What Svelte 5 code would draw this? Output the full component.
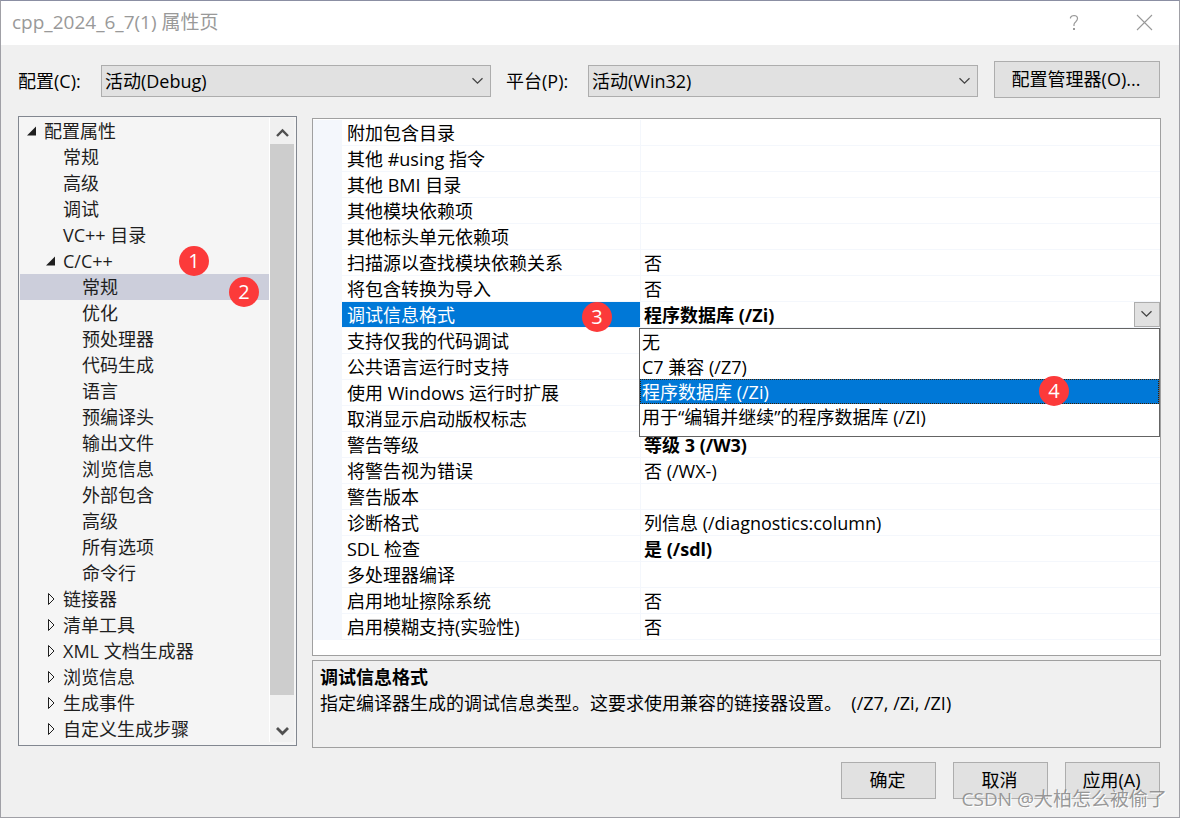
<script>
  const tree = [
    { text: '配置属性', level: 0, open: true },
    { text: '常规', level: 1 },
    { text: '高级', level: 1 },
    { text: '调试', level: 1 },
    { text: 'VC++ 目录', level: 1 },
    { text: 'C/C++', level: 1, open: true, badge: 1 },
    { text: '常规', level: 2, badge: 2 },
    { text: '优化', level: 2 },
    { text: '预处理器', level: 2 },
    { text: '代码生成', level: 2 },
    { text: '语言', level: 2 },
    { text: '预编译头', level: 2 },
    { text: '输出文件', level: 2 },
    { text: '浏览信息', level: 2 },
    { text: '外部包含', level: 2 },
    { text: '高级', level: 2 },
    { text: '所有选项', level: 2 },
    { text: '命令行', level: 2 },
    { text: '链接器', level: 1, open: false },
    { text: '清单工具', level: 1, open: false },
    { text: 'XML 文档生成器', level: 1, open: false },
    { text: '浏览信息', level: 1, open: false },
    { text: '生成事件', level: 1, open: false },
    { text: '自定义生成步骤', level: 1, open: false }
  ];
  let current = $state(6);

  const options = ['无', 'C7 兼容 (/Z7)', '程序数据库 (/Zi)', '用于“编辑并继续”的程序数据库 (/ZI)'];
  let chosen = $state(2);
  let listOpen = $state(true);

  const properties = [
    { name: '附加包含目录', value: '' },
    { name: '其他 #using 指令', value: '' },
    { name: '其他 BMI 目录', value: '' },
    { name: '其他模块依赖项', value: '' },
    { name: '其他标头单元依赖项', value: '' },
    { name: '扫描源以查找模块依赖关系', value: '否' },
    { name: '将包含转换为导入', value: '否' },
    { name: '调试信息格式', editing: true },
    { name: '支持仅我的代码调试', value: '' },
    { name: '公共语言运行时支持', value: '' },
    { name: '使用 Windows 运行时扩展', value: '' },
    { name: '取消显示启动版权标志', value: '' },
    { name: '警告等级', value: '等级 3 (/W3)', bold: true },
    { name: '将警告视为错误', value: '否 (/WX-)' },
    { name: '警告版本', value: '' },
    { name: '诊断格式', value: '列信息 (/diagnostics:column)' },
    { name: 'SDL 检查', value: '是 (/sdl)', bold: true },
    { name: '多处理器编译', value: '' },
    { name: '启用地址擦除系统', value: '否' },
    { name: '启用模糊支持(实验性)', value: '否' }
  ];
</script>

{#snippet chevron()}
  <svg class="chevron" width="12" height="8" viewBox="0 0 12 8" aria-hidden="true">
    <path d="M0.5 1.2 5.5 6.2 10.5 1.2" fill="none" stroke="#444" stroke-width="1.3" />
  </svg>
{/snippet}

<div class="dialog">
  <header>
    <h1>cpp_2024_6_7(1) 属性页</h1>
    <button class="caption" aria-label="帮助">
      <svg width="10" height="17" viewBox="0 0 10 17" aria-hidden="true">
        <path d="M1.5 4.6V3.4Q2.6 1.5 5 1.5 8.5 1.6 8.5 4.6 8.5 6.2 6.8 7.7 5 9.2 5 10.6V12" fill="none" stroke="#999" stroke-width="1.2" />
        <rect x="4" y="14" width="2" height="2" fill="#999" />
      </svg>
    </button>
    <button class="caption" aria-label="关闭">
      <svg width="17" height="17" viewBox="0 0 17 17" aria-hidden="true">
        <path d="M1 1 16 16M16 1 1 16" stroke="#999" stroke-width="1.1" />
      </svg>
    </button>
  </header>

  <div class="toolbar">
    <label class="first" for="config">配置(C):</label>
    <div class="combo">
      <select id="config"><option>活动(Debug)</option></select>
      {@render chevron()}
    </div>
    <label class="second" for="platform">平台(P):</label>
    <div class="combo">
      <select id="platform"><option>活动(Win32)</option></select>
      {@render chevron()}
    </div>
    <button class="push manager">配置管理器(O)...</button>
  </div>

  <main>
    <nav class="tree">
      <ul>
        {#each tree as node, i}
          <li>
            <button class:current={i === current} style="padding-left: {5 + node.level * 19}px" onclick={() => (current = i)}>
              <span class="twisty">
                {#if node.open === true}
                  <svg width="10" height="10" viewBox="0 0 10 10" aria-hidden="true"><path d="M9 0.5V9.5H0Z" fill="#1e1e1e" /></svg>
                {:else if node.open === false}
                  <svg width="10" height="14" viewBox="0 0 10 14" aria-hidden="true"><path d="M2.5 1.5V12.5L8 7Z" fill="none" stroke="#1e1e1e" /></svg>
                {/if}
              </span>
              {node.text}
            </button>
            {#if node.badge}<span class="badge step{node.badge}">{node.badge}</span>{/if}
          </li>
        {/each}
      </ul>
      <div class="scrollbar" aria-hidden="true">
        <svg width="24" height="26" viewBox="0 0 24 26"><path d="M7 18 12.5 12.5 18 18" fill="none" stroke="#505050" stroke-width="2.4" /></svg>
        <div class="thumb"></div>
        <svg width="24" height="26" viewBox="0 0 24 26"><path d="M7 12 12.5 17.5 18 12" fill="none" stroke="#505050" stroke-width="2.8" /></svg>
      </div>
    </nav>

    <section>
      <div class="sheet">
        <table>
          <colgroup><col class="gutter" /><col class="names" /><col /></colgroup>
          <tbody>
            {#each properties as p}
              <tr class:editing={p.editing}>
                <td class="margin"></td>
                <th scope="row">
                  {p.name}
                  {#if p.editing}<span class="badge step3">3</span>{/if}
                </th>
                <td class="value" class:bold={p.bold}>
                  {#if p.editing}
                    <div class="editor">
                      <span>{options[chosen]}</span>
                      <button aria-label="展开" aria-expanded={listOpen} onclick={() => (listOpen = !listOpen)}>{@render chevron()}</button>
                    </div>
                    {#if listOpen}
                      <div class="list" role="listbox" aria-label={p.name}>
                        {#each options as option, i}
                          <button role="option" aria-selected={i === chosen} class:chosen={i === chosen} onclick={() => (chosen = i)}>{option}</button>
                        {/each}
                        <span class="badge step4">4</span>
                      </div>
                    {/if}
                  {:else}
                    {p.value}
                  {/if}
                </td>
              </tr>
            {/each}
          </tbody>
        </table>
      </div>
      <div class="help">
        <h2>调试信息格式</h2>
        <p>指定编译器生成的调试信息类型。这要求使用兼容的链接器设置。&nbsp; (/Z7, /Zi, /ZI)</p>
      </div>
    </section>
  </main>

  <footer>
    <button class="push">确定</button>
    <button class="push">取消</button>
    <button class="push">应用(A)</button>
  </footer>
  <div class="watermark">CSDN @大柏怎么被偷了</div>
</div>

<style>
  :global(body) {
    background: #f0f0f0;
  }
  .dialog,
  .dialog * {
    box-sizing: border-box;
  }
  .dialog {
    position: relative;
    display: flex;
    flex-direction: column;
    min-height: 100vh;
    border: 1px solid #a0a0a6;
    border-top-color: #8b8fa3;
    background: #f0f0f0;
    color: #000;
    font: 18px/26px 'Open Sans', 'Noto Sans CJK SC', sans-serif;
  }
  button,
  select {
    font: inherit;
    color: inherit;
    margin: 0;
    border-radius: 0;
  }
  header {
    display: flex;
    align-items: center;
    height: 44px;
    padding-left: 11px;
    background: #fff;
  }
  h1 {
    flex: 1;
    margin: 0;
    padding-bottom: 2px;
    font-size: 19px;
    font-weight: 400;
    color: #999;
  }
  .caption {
    display: grid;
    place-items: center;
    width: 70px;
    height: 44px;
    padding: 0 0 2px;
    border: 0;
    background: none;
  }
  .toolbar {
    display: flex;
    align-items: center;
    padding: 16px 19px 0 17px;
  }
  label {
    padding-top: 2px;
  }
  .first {
    width: 83px;
  }
  .second {
    width: 97px;
    padding-left: 15px;
  }
  .combo {
    flex: 1;
    display: grid;
    align-items: center;
    padding-top: 2px;
  }
  .combo > :global(*) {
    grid-area: 1 / 1;
  }
  .combo :global(.chevron) {
    justify-self: end;
    margin-right: 7px;
    pointer-events: none;
  }
  select {
    appearance: none;
    width: 100%;
    height: 32px;
    padding: 0 24px 0 3px;
    border: 1px solid #adadad;
    background: #e1e1e1;
  }
  .push {
    width: 95px;
    height: 37px;
    padding: 0 2px 2px 0;
    border: 1px solid #adadad;
    background: #e1e1e1;
  }
  .manager {
    width: 166px;
    margin-left: 16px;
  }
  main {
    display: flex;
    align-items: flex-start;
    gap: 15px;
    padding: 18px 18px 0 17px;
  }
  .tree {
    display: flex;
    width: 279px;
    padding: 1px 2px 3px 1px;
    border: 1px solid #828790;
    background: #f5f5f5;
    color: #1e1e1e;
  }
  ul {
    flex: 1;
    margin: 0;
    padding: 0;
    list-style: none;
  }
  li {
    position: relative;
  }
  li button {
    display: flex;
    align-items: center;
    width: 100%;
    height: 26px;
    padding: 0;
    border: 0;
    background: none;
    white-space: nowrap;
  }
  li .current {
    background: #cccedb;
  }
  .twisty {
    display: flex;
    align-items: center;
    width: 19px;
    padding-left: 2px;
  }
  .scrollbar {
    display: flex;
    flex-direction: column;
    width: 25px;
    border-left: 1px solid #fff;
    background: #f0f0f0;
  }
  .scrollbar svg {
    display: block;
  }
  .thumb {
    flex: 1;
    margin-bottom: 21px;
    background: #cdcdcd;
  }
  section {
    flex: 1;
    min-width: 0;
    display: grid;
    gap: 4px;
    padding-top: 2px;
  }
  .sheet {
    padding: 1px 0 15px;
    border: 1px solid #a0a0a0;
    background: #fff;
  }
  table {
    width: 100%;
    table-layout: fixed;
    border-spacing: 0;
  }
  .gutter {
    width: 29px;
  }
  .names {
    width: 298px;
  }
  td,
  th {
    position: relative;
    height: 26px;
    padding: 2px 0 0;
    border-bottom: 1px solid #f4f7fc;
    font-weight: 400;
    line-height: 23px;
    text-align: left;
    white-space: nowrap;
  }
  .margin {
    background: #f4f7fc;
  }
  th {
    padding-left: 5px;
  }
  .value {
    padding-left: 3px;
    border-left: 1px solid #f4f7fc;
  }
  .bold,
  .editor,
  h2 {
    font-weight: 700;
  }
  .editing .value {
    padding-top: 0;
  }
  .editing th {
    background: #0078d7;
    background-clip: padding-box;
    color: #fff;
  }
  .editor {
    display: flex;
    justify-content: space-between;
    height: 25px;
  }
  .editor span {
    padding-top: 2px;
  }
  .editor button {
    display: grid;
    place-items: center;
    width: 26px;
    height: 25px;
    padding: 0 0 2px;
    border: 1px solid #adadad;
    background: #e1e1e1;
  }
  .list {
    position: absolute;
    z-index: 1;
    top: 26px;
    left: -2px;
    right: 0;
    padding-bottom: 7px;
    border: 1px solid #646464;
    background: #fff;
  }
  .list button {
    display: block;
    width: 100%;
    height: 25px;
    padding: 2px 0 0 2px;
    border: 0;
    background: none;
    line-height: 23px;
    text-align: left;
  }
  .list .chosen {
    background: #0078d7;
    color: #fff;
    outline: 1px dotted #3a1c00;
    outline-offset: -1px;
  }
  .badge {
    position: absolute;
    z-index: 2;
    width: 30px;
    height: 30px;
    border-radius: 50%;
    background: #fc3a3a;
    color: #fff;
    font-size: 20px;
    line-height: 29px;
    text-align: center;
  }
  .step1 {
    top: -2px;
    right: 60px;
  }
  .step2 {
    top: 3px;
    right: 10px;
  }
  .step3 {
    top: 0;
    right: 28px;
  }
  .step4 {
    top: 47px;
    right: 90px;
  }
  .help {
    min-height: 88px;
    padding: 3px 7px;
    border: 1px solid #a0a0a0;
  }
  h2,
  p {
    margin: 0;
    font-size: 18px;
  }
  footer {
    display: flex;
    justify-content: flex-end;
    gap: 17px;
    padding: 14px 19px 18px;
  }
  .watermark {
    position: absolute;
    right: 12px;
    bottom: 5px;
    color: rgba(128, 128, 128, 0.8);
    font-size: 19px;
    text-shadow: 1px 1px 0 #fff;
    pointer-events: none;
  }
</style>
